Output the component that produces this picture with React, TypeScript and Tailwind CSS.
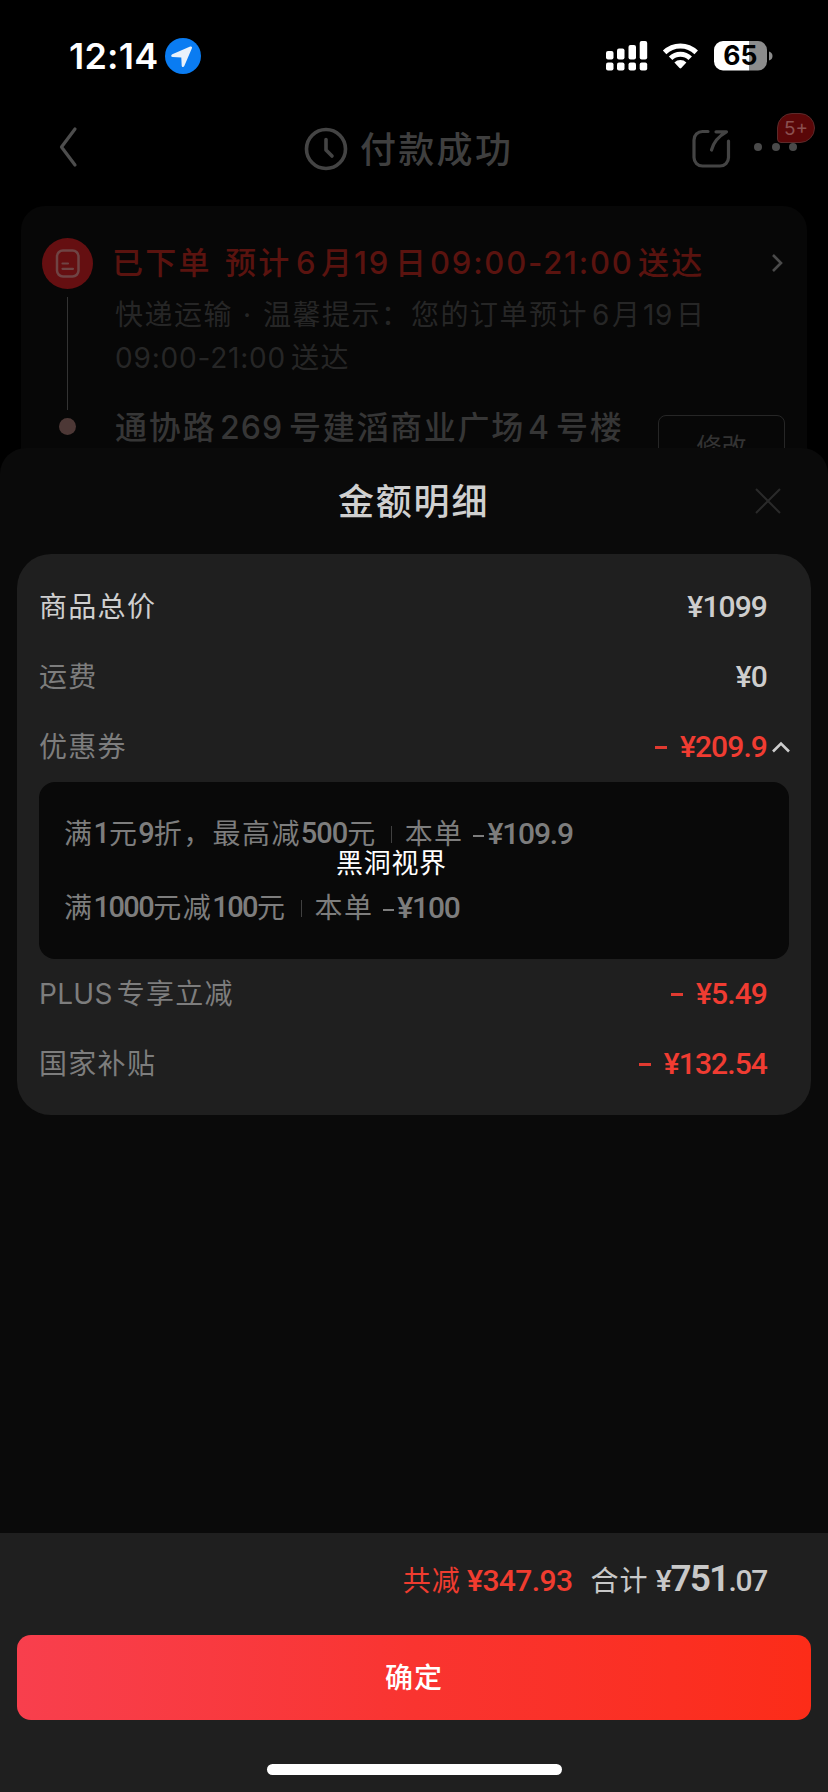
import clsx from "clsx";

interface PriceRowProps {
  label: React.ReactNode;
  amount: string;
  discount?: boolean;
  expanded?: boolean;
  strong?: boolean;
}

interface CouponLineProps {
  parts: { text: string; num?: boolean; tight?: boolean }[];
  amount: string;
}

const NUM = "font-['Roboto','Noto_Sans_CJK_SC',sans-serif]";

function StatusBar() {
  return (
    <div className="flex h-[96px] items-center pt-[15px] pl-[69px] pr-[55px]">
      <span className="w-[95px] whitespace-nowrap text-[36px] leading-none font-semibold tracking-[0.2px] text-white">
        12:14
      </span>
      <svg className="h-[38px] w-[38px]" viewBox="0 0 38 38">
        <circle cx="19" cy="19" r="18" fill="#0a7cf2" />
        <path
          d="M8.3 17.2 26.2 9.6c1.4-.5 2.2.4 1.7 1.7L20.3 29c-.6 1.5-2.5 1.3-2.6-.3l-.4-8.2-8.6-.4c-1.8-.1-2-2.2-.4-2.9Z"
          fill="#e8f1fb"
        />
      </svg>
      <svg className="ml-auto h-[32px] w-[168px]" viewBox="605 39 168 32">
        <g fill="#fff">
          <rect x="606" y="50" width="7.5" height="8.5" rx="2" />
          <rect x="617" y="47.5" width="7.5" height="11" rx="2" />
          <rect x="628.5" y="44" width="7.5" height="14.5" rx="2" />
          <rect x="639.7" y="40" width="7.5" height="18.5" rx="2" />
          <rect x="606" y="61.5" width="7.5" height="8" rx="2" />
          <rect x="617" y="61.5" width="7.5" height="8" rx="2" />
          <rect x="628.5" y="61.5" width="7.5" height="8" rx="2" />
          <rect x="639.7" y="61.5" width="7.5" height="8" rx="2" />
        </g>
        <g fill="none" stroke="#fff" strokeWidth="5">
          <path d="M664.6 51.4a22.6 22.6 0 0 1 31.6 0" />
          <path d="M670.6 57.3a14 14 0 0 1 19.6 0" />
        </g>
        <path d="M674.4 61.6a8.5 8.5 0 0 1 12 0l-5.1 5.5q-.9.9-1.8 0Z" fill="#fff" />
        <path d="M723 40H749V69.5H723a9 9 0 0 1-9-9V49a9 9 0 0 1 9-9Z" fill="#fff" />
        <path d="M749 40h9a9 9 0 0 1 9 9v11.5a9 9 0 0 1-9 9h-9Z" fill="#8c8c8c" />
        <path d="M769 50.5q3.5 1 3.5 4.5t-3.5 4.5Z" fill="#8c8c8c" />
        <text
          x="740.3"
          y="64.4"
          textAnchor="middle"
          fontFamily="Inter, sans-serif"
          fontSize="26.5"
          fontWeight="700"
          fill="#000"
        >
          65
        </text>
      </svg>
    </div>
  );
}

function PageHeader() {
  return (
    <header className="flex h-[110px] items-center pl-[58px] pr-[15px]">
      <svg
        className="-mt-[8px] h-[44px] w-[22px]"
        viewBox="0 0 22 44"
        fill="none"
        stroke="#4d4d4d"
        strokeWidth="3.2"
        strokeLinecap="round"
        strokeLinejoin="round"
      >
        <path d="M17 4 3.5 22 17 40" />
      </svg>
      <svg
        className="-mt-[4px] ml-[223px] h-[46px] w-[46px]"
        viewBox="0 0 46 46"
        fill="none"
        stroke="#444"
        strokeWidth="3.6"
        strokeLinecap="round"
        strokeLinejoin="round"
      >
        <circle cx="23" cy="23" r="19.5" />
        <path d="M23 13.5v10.5l6 6" />
      </svg>
      <h1 className="-mt-[2px] ml-[11px] w-[320px] text-[36px] leading-none font-medium tracking-[2.3px] whitespace-nowrap text-[#3f3f3f]">
        付款成功
      </h1>
      <svg
        className="-mt-[5px] ml-[11px] h-[42px] w-[42px]"
        viewBox="0 0 42 42"
        fill="none"
        stroke="#444"
        strokeWidth="3.2"
        strokeLinecap="round"
        strokeLinejoin="round"
      >
        <path d="M17 3.5H11.5A8.5 8.5 0 0 0 3 12V29.5A8.5 8.5 0 0 0 11.5 38H29A8.5 8.5 0 0 0 37.5 29.5V13" />
        <path d="M25 3.8H35.5C27 8.5 22.5 14 20.5 22" />
      </svg>
      <div className="relative -mt-[8px] ml-[21px] flex w-[43px] justify-between">
        <i className="h-2 w-2 rounded-full bg-[#4a4a4a]" />
        <i className="h-2 w-2 rounded-full bg-[#4a4a4a]" />
        <i className="h-2 w-2 rounded-full bg-[#4a4a4a]" />
        <span className="absolute -top-[30px] left-[23px] flex h-[30px] w-[38px] items-center justify-center rounded-[15px] rounded-bl-[4px] border border-[#5c2a2a] bg-[#5a0708] text-[19px] leading-none text-[#8a5050]">
          5+
        </span>
      </div>
    </header>
  );
}

function DeliveryCard() {
  return (
    <section className="mx-[21px] flex h-[280px] rounded-t-[24px] bg-[#070707] pt-[32px]">
      <div className="ml-[20px] flex w-[52px] shrink-0 flex-col items-center">
        <svg className="h-[51px] w-[51px]" viewBox="0 0 51 51" fill="none">
          <circle cx="25.5" cy="25.5" r="25.5" fill="#650f11" />
          <rect x="15" y="12.5" width="21.5" height="26" rx="6" stroke="#6f4444" strokeWidth="2.5" />
          <path d="M20.5 25.5H26M20.5 30.8H31" stroke="#6f4444" strokeWidth="2.2" strokeLinecap="round" />
        </svg>
        <div className="mt-[8px] h-[113px] w-px bg-[#333]" />
        <div className="mt-[8px] h-[17px] w-[17px] rounded-full bg-[#4d3836]" />
      </div>
      <div className="ml-[19px] w-[530px] whitespace-nowrap">
        <div className="flex h-[51px] items-center text-[31px] font-medium tracking-[2.2px] text-[#5a130f]">
          <span className="w-[113px] shrink-0">已下单</span>
          <span className="w-[71px] shrink-0">预计</span>
          <span className="w-[25px] shrink-0">6</span>
          <span className="w-[33px] shrink-0">月</span>
          <span className="w-[41px] shrink-0 tracking-[1.8px]">19</span>
          <span className="w-[35px] shrink-0">日</span>
          <span className="w-[208px] shrink-0 tracking-[1.8px]">09:00-21:00</span>
          <span>送达</span>
        </div>
        <div className="mt-[1px] ml-[3px] flex h-[49px] items-center text-[28px] tracking-[1.5px] text-[#262626]">
          <span className="w-[128px] shrink-0">快递运输</span>
          <span className="w-[20px] shrink-0">·</span>
          <span className="w-[148px] shrink-0">温馨提示：</span>
          <span className="w-[181px] shrink-0">您的订单预计</span>
          <span className="w-[20px] shrink-0">6</span>
          <span className="w-[31px] shrink-0">月</span>
          <span className="w-[33px] shrink-0 tracking-[0.5px]">19</span>
          <span>日</span>
        </div>
        <div className="ml-[3px] flex h-[38px] items-center text-[28px] tracking-[1.5px] text-[#262626]">
          <span className="w-[176px] shrink-0 tracking-[0.8px]">09:00-21:00</span>
          <span>送达</span>
        </div>
        <div className="mt-[28px] ml-[3px] flex h-[46px] items-center text-[32px] font-medium tracking-[1.7px] text-[#363636]">
          <span className="w-[105px] shrink-0">通协路</span>
          <span className="w-[69px] shrink-0 tracking-[1px]">269</span>
          <span className="w-[239px] shrink-0">号建滔商业广场</span>
          <span className="w-[28px] shrink-0">4</span>
          <span>号楼</span>
        </div>
      </div>
      <div className="flex flex-1 flex-col items-end pr-[22px]">
        <svg className="mt-[15px] h-[20px] w-[14px]" viewBox="0 0 14 20" fill="none" stroke="#4a4a4a" strokeWidth="2.6">
          <path d="M2 2 10 10 2 18" />
        </svg>
        <div className="mt-[142px] flex h-[65px] w-[127px] shrink-0 items-center justify-center rounded-[8px] border border-[#262626] text-[25px] text-[#333]">
          修改
        </div>
      </div>
    </section>
  );
}

function PriceRow({ label, amount, discount, expanded, strong }: PriceRowProps) {
  return (
    <div className="flex h-[70px] items-center">
      <span
        className={clsx(
          "text-[28px] tracking-[1.3px] whitespace-nowrap",
          strong ? "text-[#cfcfcf]" : "text-[#7d7d7d]",
        )}
      >
        {label}
      </span>
      <span
        className={clsx(
          NUM,
          "-mt-[2px] ml-auto flex text-[30px] font-medium tracking-[-0.9px]",
          discount ? "text-[#f03c32]" : "text-[#cdcdcd]",
        )}
      >
        {discount && <i className="mt-[22px] mr-[13px] h-[3px] w-[12px] bg-[#e03a30]" />}
        {amount}
      </span>
      <span className="flex w-[22px] justify-end">
        {expanded && (
          <svg className="-mr-[1px] h-[12px] w-[18px]" viewBox="0 0 18 12" fill="none" stroke="#cdcdcd" strokeWidth="2.6">
            <path d="M1 10.5 9 2.5 17 10.5" />
          </svg>
        )}
      </span>
    </div>
  );
}

function CouponLine({ parts, amount }: CouponLineProps) {
  return (
    <div className="flex h-[74px] items-center text-[28px] tracking-[1.4px] whitespace-nowrap text-[#7d7d7d]">
      {parts.map((part) => (
        <span
          key={part.text}
          className={clsx(
            part.num && `${NUM} text-[29px] font-medium`,
            part.num && (part.tight ? "tracking-[-1.5px]" : "tracking-[-1px]"),
          )}
        >
          {part.text}
        </span>
      ))}
      <i className="mr-[13px] ml-[14px] h-[17px] w-px bg-[#404040]" />
      <span>本单</span>
      <i className="mt-[4px] mr-[3px] ml-[10px] h-[2.5px] w-[11px] bg-[#7d7d7d]" />
      <span className={clsx(NUM, "-mt-[2px] text-[30px] font-medium tracking-[-1.2px]")}>{amount}</span>
    </div>
  );
}

function AmountSheet() {
  return (
    <section className="relative -mt-[38px] flex h-[1344px] flex-col rounded-t-[26px] bg-[#0a0a0a]">
      <div className="flex h-[106px] items-center pt-[2px] pl-[338px] pr-[46px]">
        <h2 className="text-[36px] font-medium tracking-[1.8px] whitespace-nowrap text-[#d0d0d0]">金额明细</h2>
        <svg className="-mt-[3px] ml-auto h-[28px] w-[28px]" viewBox="0 0 28 28" stroke="#2a2a2a" strokeWidth="2">
          <path d="M2 2 26 26M26 2 2 26" />
        </svg>
      </div>

      <div className="mx-[17px] h-[561px] rounded-[34px] bg-[#1f1f1f] px-[22px] pt-[18px]">
        <PriceRow label="商品总价" amount="¥1099" strong />
        <PriceRow label="运费" amount="¥0" />
        <PriceRow label="优惠券" amount="¥209.9" discount expanded />
        <div className="h-[177px] rounded-[16px] bg-[#090909] px-[25px] pt-[15px]">
          <CouponLine
            parts={[
              { text: "满" },
              { text: "1", num: true },
              { text: "元" },
              { text: "9", num: true },
              { text: "折，最高减" },
              { text: "500", num: true },
              { text: "元 " },
            ]}
            amount="¥109.9"
          />
          <CouponLine
            parts={[
              { text: "满" },
              { text: "1000", num: true, tight: true },
              { text: "元减" },
              { text: "100", num: true, tight: true },
              { text: "元 " },
            ]}
            amount="¥100"
          />
        </div>
        <PriceRow
          label={
            <>
              <span className="mr-[4px] tracking-[0.3px]">PLUS</span>专享立减
            </>
          }
          amount="¥5.49"
          discount
        />
        <PriceRow label="国家补贴" amount="¥132.54" discount />
      </div>

      {/* floating caption sits over the coupon list */}
      <span className="absolute top-[396px] left-[336px] text-[27px] tracking-[0.7px] whitespace-nowrap text-white">
        黑洞视界
      </span>

      <footer className="mt-auto h-[259px] bg-[#1f1f1f] px-[17px]">
        <div className="flex h-[102px] items-baseline justify-end pt-[18px] pr-[44px] text-[28px] tracking-[1.2px] whitespace-nowrap text-[#c8c8c8]">
          <span className="text-[#f03c2f]">共减</span>
          <span className={clsx(NUM, "ml-[6px] text-[30px] font-medium tracking-[-0.6px] text-[#f03c2f]")}>
            ¥347.93
          </span>
          <span className="ml-[18px]">合计</span>
          <span className={clsx(NUM, "ml-[7px] text-[30px] font-medium tracking-[-1.3px]")}>
            ¥<b className="text-[37px] font-semibold tracking-[-1.8px]">751</b>.07
          </span>
        </div>
        <button className="block h-[85px] w-full rounded-[14px] bg-linear-to-r from-[#f83f4d] via-[#f93430] to-[#fc2c18] text-[28px] font-medium tracking-[1px] text-white">
          确定
        </button>
        <div className="mx-auto mt-[44px] h-[11px] w-[295px] rounded-full bg-white" />
      </footer>
    </section>
  );
}

export default function App() {
  return (
    <main className="flex h-[1792px] w-[828px] flex-col overflow-hidden bg-black font-['Inter','Noto_Sans_CJK_SC',sans-serif]">
      <StatusBar />
      <PageHeader />
      <DeliveryCard />
      <AmountSheet />
    </main>
  );
}
